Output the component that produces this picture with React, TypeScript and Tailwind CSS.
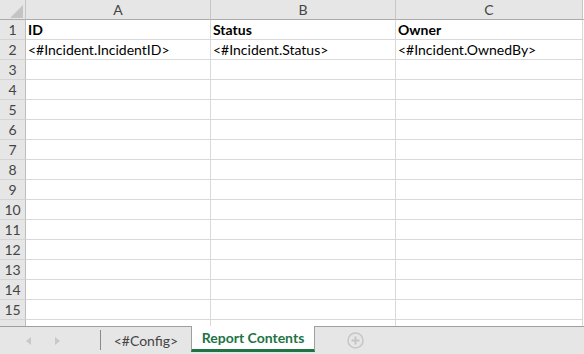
import React from "react";

const rows = Array.from({ length: 15 }, (_, i) => i + 1);

export default function App() {
  const font = { fontFamily: "Lato, 'Open Sans', sans-serif" };
  return (
    <div className="w-[584px] h-[354px] bg-white overflow-hidden flex flex-col text-[14px] text-black" style={font}>
      {/* grid */}
      <div className="grid grid-cols-[26px_185px_185px_187px_1fr] grid-rows-[repeat(16,20px)_6px] shrink-0">
        {/* header row */}
        <div className="relative bg-[#e6e6e6] border-r border-b border-r-[#c6c6c6] border-b-[#ababab]">
          <svg className="absolute left-[10px] top-[5px]" width="13" height="13" viewBox="0 0 13 13">
            <polygon points="13,0 13,13 0,13" fill="#c4c4c4" />
          </svg>
        </div>
        {["A", "B", "C"].map((c) => (
          <div key={c} className="bg-[#e6e6e6] border-r border-b border-r-[#c6c6c6] border-b-[#ababab] flex items-center justify-center text-[#444]">
            {c}
          </div>
        ))}
        <div className="bg-white border-b border-b-[#ababab]" />
        {rows.map((r) => (
          <React.Fragment key={r}>
            <div className="bg-[#e6e6e6] border-r border-b border-r-[#bdbdbd] border-b-[#d4d4d4] flex items-center justify-center text-[#444]">
              {r}
            </div>
            {[0, 1, 2].map((c) => {
              let t = "";
              let bold = false;
              if (r === 1) {
                t = ["ID", "Status", "Owner"][c];
                bold = true;
              } else if (r === 2) {
                t = ["<#Incident.IncidentID>", "<#Incident.Status>", "<#Incident.OwnedBy>"][c];
              }
              return (
                <div
                  key={c}
                  className={`border-r border-b border-[#d9d9d9] flex items-center pl-[2px] whitespace-nowrap overflow-hidden ${bold ? "font-bold" : ""}`}
                >
                  {t}
                </div>
              );
            })}
            <div className="bg-white" />
          </React.Fragment>
        ))}
        {/* partial row */}
        <div className="bg-[#e6e6e6] border-r border-r-[#bdbdbd]" />
        <div className="border-r border-[#d9d9d9]" />
        <div className="border-r border-[#d9d9d9]" />
        <div className="border-r border-[#d9d9d9]" />
        <div />
      </div>
      {/* tab bar */}
      <div className="h-[28px] shrink-0 bg-[#e6e6e6] border-t border-[#9f9f9f] flex items-stretch">
        <div className="w-[100px] flex items-center">
          <svg className="ml-[26px]" width="6" height="8" viewBox="0 0 6 8">
            <polygon points="5,0 5,8 0,4" fill="#c8c8c8" />
          </svg>
          <svg className="ml-[22px]" width="6" height="8" viewBox="0 0 6 8">
            <polygon points="1,0 1,8 6,4" fill="#c8c8c8" />
          </svg>
        </div>
        <div className="w-px bg-[#8a8a8a] mt-[3px] mb-[4px]" />
        <div className="w-[90px] flex items-center justify-center text-[#444] pb-[1px]">&lt;#Config&gt;</div>
        <div className="w-[124px] -mt-px bg-white border-l border-r border-[#9f9f9f] border-b-[3px] border-b-[#217346] flex items-center justify-center font-bold text-[#217346] mb-[2px]">
          Report Contents
        </div>
        <div className="flex items-center ml-[32px]">
          <svg width="17" height="17" viewBox="0 0 17 17">
            <circle cx="8.5" cy="8.5" r="7.5" fill="none" stroke="#c6c6c6" strokeWidth="1.5" />
            <line x1="8.5" y1="4.5" x2="8.5" y2="12.5" stroke="#c6c6c6" strokeWidth="2" />
            <line x1="4.5" y1="8.5" x2="12.5" y2="8.5" stroke="#c6c6c6" strokeWidth="2" />
          </svg>
        </div>
      </div>
    </div>
  );
}
